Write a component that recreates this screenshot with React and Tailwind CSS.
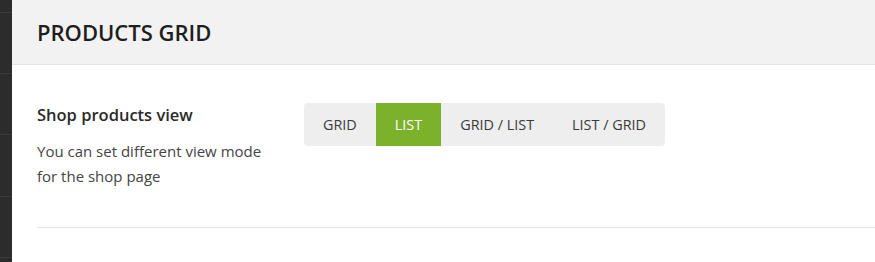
export default function App() {
  const opts = ["GRID", "LIST", "GRID / LIST", "LIST / GRID"];
  return (
    <div className="flex w-[875px] h-[262px] overflow-hidden bg-white" style={{ fontFamily: '"Open Sans", "Noto Sans", sans-serif' }}>
      <div className="w-[12px] shrink-0 bg-[#2c2c2c] flex flex-col">
        <div className="h-[13px] border-b border-[#3b3b3b] shrink-0" />
        <div className="h-[61px] border-b border-[#3b3b3b] shrink-0" />
        <div className="h-[61px] border-b border-[#3b3b3b] shrink-0" />
        <div className="h-[62px] border-b border-[#3b3b3b] shrink-0" />
        <div className="h-[61px] border-b border-[#3b3b3b] shrink-0" />
      </div>
      <div className="flex-1 flex flex-col">
        <div className="h-[65px] bg-[#f2f2f2] border-b border-[#e3e3e3] flex items-center pl-[25px]">
          <h1 className="text-[22px] font-semibold text-[#1e1e1e]">PRODUCTS GRID</h1>
        </div>
        <div className="pl-[25px]">
          <div className="flex pt-[37px] pb-[38px] border-b border-[#e6e6e6]">
            <div className="w-[267px] shrink-0">
              <div className="text-[16.5px] font-semibold text-[#2a2a2a] leading-[26px]">Shop products view</div>
              <p className="mt-[11px] text-[15px] leading-[25px] text-[#444]">
                You can set different view mode
                <br />
                for the shop page
              </p>
            </div>
            <div className="flex h-[43px] mt-[1px] rounded-[4px] bg-[#eeeeee] overflow-hidden">
              {opts.map((o) => (
                <div
                  key={o}
                  className={
                    o === "LIST"
                      ? "px-[19px] flex items-center text-[14.4px] text-white bg-[#7cb12b]"
                      : "px-[19px] flex items-center text-[14.4px] text-[#3a3a3a]"
                  }
                >
                  {o}
                </div>
              ))}
            </div>
          </div>
        </div>
      </div>
    </div>
  );
}
